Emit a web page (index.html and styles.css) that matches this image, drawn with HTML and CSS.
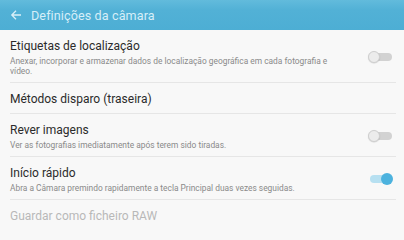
FILE: index.html
```html
<!DOCTYPE html>
<html lang="pt">
<head>
<meta charset="utf-8">
<link rel="stylesheet" href="styles.css">
</head>
<body>
<div class="screen">
  <header class="appbar">
    <svg class="back" width="12" height="12" viewBox="0 0 12 12"><path d="M11 6H2M6 1.8L1.8 6L6 10.2" fill="none" stroke="#d9eff8" stroke-width="1.3"/></svg>
    <span class="apptitle">Definições da câmara</span>
  </header>
  <div class="list">
    <div class="row r1">
      <div class="text">
        <div class="title">Etiquetas de localização</div>
        <div class="sub">Anexar, incorporar e armazenar dados de localização geográfica em cada fotografia e vídeo.</div>
      </div>
      <div class="switch off"><span class="knob"></span></div>
    </div>
    <div class="row r2">
      <div class="text"><div class="title">Métodos disparo (traseira)</div></div>
    </div>
    <div class="row r3">
      <div class="text">
        <div class="title">Rever imagens</div>
        <div class="sub">Ver as fotografias imediatamente após terem sido tiradas.</div>
      </div>
      <div class="switch off"><span class="knob"></span></div>
    </div>
    <div class="row r4">
      <div class="text">
        <div class="title">Início rápido</div>
        <div class="sub">Abra a Câmara premindo rapidamente a tecla Principal duas vezes seguidas.</div>
      </div>
      <div class="switch on"><span class="knob"></span></div>
    </div>
    <div class="row r5 disabled">
      <div class="text"><div class="title">Guardar como ficheiro RAW</div></div>
    </div>
  </div>
</div>
</body>
</html>
```
FILE: styles.css
```css
* { box-sizing: border-box; }
html, body { margin: 0; padding: 0; }
body {
  width: 404px;
  height: 227px;
  overflow: hidden;
  background: #f8f8f8;
  font-family: Roboto, "Noto Sans", sans-serif;
}
.screen { width: 404px; height: 227px; display: flex; flex-direction: column; }
.appbar {
  height: 30px;
  flex: none;
  display: flex;
  align-items: center;
  padding-left: 10px;
  background: linear-gradient(#62bbdc 0px, #52b1d6 10px, #4daed4 30px);
}
.back { margin-right: 9px; }
.apptitle { color: #d6eef8; font-size: 12.6px; letter-spacing: 0.1px; }
.list { padding: 0 8px 0 10px; }
.row {
  display: flex;
  align-items: center;
  border-bottom: 1px solid #e6e6e6;
}
.text { flex: 1; min-width: 0; padding-top: 3px; }
.title { color: #2b2b2b; font-size: 12px; line-height: 15px; }
.sub { color: #8a8a8a; font-size: 8.4px; line-height: 10.5px; margin-top: 2px; padding-right: 28px; }
.r1 { height: 53px; }
.r2 { height: 31px; }
.r3 { height: 43px; }
.r4 { height: 43px; }
.r5 { height: 27px; border-bottom: none; }
.r5 .text { padding-top: 6px; }
.disabled .title { color: #b8b8b8; }
.switch { position: relative; width: 24px; height: 12px; flex: none; margin-right: 4px; margin-top: 1px; }
.switch::before {
  content: "";
  position: absolute;
  left: 2px; right: 0; top: 2px; height: 8px;
  border-radius: 4px;
}
.off::before { background: #d2d2d2; }
.on::before { background: #b7e0f1; }
.knob {
  position: absolute;
  top: 0;
  width: 12px; height: 12px;
  border-radius: 50%;
}
.off .knob { left: 0; background: #ececec; border: 1px solid #cfcfcf; box-shadow: 0 0.5px 1px rgba(0,0,0,0.15); }
.on .knob { right: -1px; background: #4cb2de; }
```
